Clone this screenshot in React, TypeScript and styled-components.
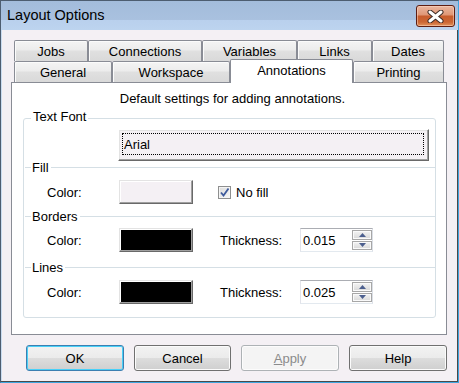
import React from "react";
import styled, { createGlobalStyle } from "styled-components";

const GlobalStyle = createGlobalStyle`
  html, body {
    margin: 0;
    padding: 0;
  }
  body {
    font-family: "Liberation Sans", Arial, sans-serif;
    font-size: 13px;
    color: #000;
  }
`;

// tab rows: the selected row sits in front, next to the panel
const backRow: [string, number][] = [
  ["Jobs", 74],
  ["Connections", 114],
  ["Variables", 95],
  ["Links", 75],
  ["Dates", 72],
];

const frontRow: [string, number][] = [
  ["General", 98],
  ["Workspace", 118],
  ["Annotations", 123],
  ["Printing", 91],
];

const ACTIVE_TAB = "Annotations";

const CloseIcon = () => (
  <svg width="17" height="13" viewBox="0 0 17 13">
    <path d="M3 2 L14 11 M14 2 L3 11" stroke="#3b2a25" strokeWidth="5" strokeLinecap="round" />
    <path d="M3 2 L14 11 M14 2 L3 11" stroke="#ffffff" strokeWidth="3" strokeLinecap="round" />
  </svg>
);

const CheckIcon = () => (
  <svg width="11" height="11" viewBox="0 0 11 11">
    <path d="M2 5.5 L4.5 8.5 L9.5 1.5" stroke="#3d5a9c" strokeWidth="1.8" fill="none" />
  </svg>
);

const Arrow = ({ up }: { up?: boolean }) => (
  <svg width="7" height="4" viewBox="0 0 7 4">
    <path d={up ? "M0 4 L3.5 0 L7 4 Z" : "M0 0 L3.5 4 L7 0 Z"} fill="#4c5f8e" />
  </svg>
);

const Spinner = ({ value }: { value: string }) => (
  <Spin>
    <SpinValue>{value}</SpinValue>
    <SpinButtons>
      <SpinButton>
        <Arrow up />
      </SpinButton>
      <SpinButton>
        <Arrow />
      </SpinButton>
    </SpinButtons>
  </Spin>
);

const App: React.FC = () => {
  return (
    <>
      <GlobalStyle />
      <Window>
        <TitleBar>
          <Title>Layout Options</Title>
          <CloseButton>
            <CloseIcon />
          </CloseButton>
        </TitleBar>

        <Body>
          <TabRow>
            {backRow.map(([label, w]) => (
              <Tab key={label} $w={w}>
                {label}
              </Tab>
            ))}
          </TabRow>
          <TabRow>
            {frontRow.map(([label, w]) => (
              <Tab key={label} $w={w} $active={label === ACTIVE_TAB}>
                {label}
              </Tab>
            ))}
          </TabRow>

          <Panel>
            <Description>Default settings for adding annotations.</Description>

            <GroupBox>
              <Legend>Text Font</Legend>
              <FontRow>
                <FontButton>
                  <FocusRect>Arial</FocusRect>
                </FontButton>
              </FontRow>

              <Separator $top={-1}>
                <Dash />
                <SepLabel>Fill</SepLabel>
                <SepLine />
              </Separator>
              <Row $top={5}>
                <Label>Color:</Label>
                <Swatch $color="#f4f0f4" />
                <CheckWrap>
                  <CheckBox>
                    <CheckIcon />
                  </CheckBox>
                  No fill
                </CheckWrap>
              </Row>

              <Separator $top={5}>
                <Dash />
                <SepLabel>Borders</SepLabel>
                <SepLine />
              </Separator>
              <Row $top={4}>
                <Label>Color:</Label>
                <Swatch $color="#000" />
                <ThickLabel>Thickness:</ThickLabel>
                <Spinner value="0.015" />
              </Row>

              <Separator $top={8}>
                <Dash />
                <SepLabel>Lines</SepLabel>
                <SepLine />
              </Separator>
              <Row $top={5} $bottom={13}>
                <Label>Color:</Label>
                <Swatch $color="#000" />
                <ThickLabel>Thickness:</ThickLabel>
                <Spinner value="0.025" />
              </Row>
            </GroupBox>
          </Panel>

          <ButtonRow>
            <DialogButton $w={98} $default>
              OK
            </DialogButton>
            <DialogButton $w={97}>Cancel</DialogButton>
            <DialogButton $w={98} disabled>
              <u>A</u>pply
            </DialogButton>
            <DialogButton $w={98}>Help</DialogButton>
          </ButtonRow>
        </Body>
      </Window>
    </>
  );
};

export default App;

const Window = styled.div`
  width: 459px;
  height: 383px;
  box-sizing: border-box;
  display: flex;
  flex-direction: column;
  background: #f4f0f4;
  border: 1px solid;
  border-color: #4d5d70 #3fa6df #3fa6df #4d5d70;
  box-shadow: inset -1px -1px 0 #4a4a4a, inset 1px 0 0 #c9dcf0;
`;

const TitleBar = styled.div`
  height: 29px;
  flex-shrink: 0;
  display: flex;
  align-items: flex-start;
  justify-content: space-between;
  padding: 0 3px 0 6px;
  background: linear-gradient(
    to bottom,
    #a3bcdb 0,
    #a9c1df 19px,
    #b9d0ed 19px,
    #bdd4ef 100%
  );
`;

const Title = styled.div`
  font-size: 14.5px;
  line-height: 17px;
  margin-top: 6px;
  color: #000;
`;

const CloseButton = styled.div`
  width: 39px;
  height: 22px;
  box-sizing: border-box;
  margin-top: 4px;
  display: flex;
  align-items: center;
  justify-content: center;
  border: 1px solid #5e1e12;
  border-radius: 3px;
  background: linear-gradient(
    to bottom,
    #eab7a0 0%,
    #df9675 45%,
    #c75c2c 50%,
    #cb6634 80%,
    #e3935c 100%
  );
  box-shadow: inset 0 0 0 1px rgba(255, 220, 200, 0.5);
`;

const Body = styled.div`
  flex: 1;
  display: flex;
  flex-direction: column;
  padding: 10px 11px 0 10px;
`;

const TabRow = styled.div`
  display: flex;
  align-items: flex-start;
  height: 21px;
  padding-left: 3px;
`;

const Tab = styled.div<{ $w: number; $active?: boolean }>`
  box-sizing: border-box;
  width: ${({ $w }) => $w}px;
  height: ${({ $active }) => ($active ? 24 : 21)}px;
  margin-top: ${({ $active }) => ($active ? -2 : 0)}px;
  padding-bottom: ${({ $active }) => ($active ? 2 : 0)}px;
  display: flex;
  align-items: center;
  justify-content: center;
  line-height: 15px;
  border: 1px solid #898c95;
  border-bottom: none;
  border-radius: 2px 2px 0 0;
  position: relative;
  z-index: ${({ $active }) => ($active ? 2 : 1)};
  background: ${({ $active }) =>
    $active
      ? "#ffffff"
      : "linear-gradient(to bottom, #f4f4f4 0%, #ececec 45%, #e0e0e0 50%, #d9d9d9 100%)"};
  box-shadow: ${({ $active }) =>
    $active ? "none" : "inset 1px 1px 0 #fbfbfb"};
`;

const Panel = styled.div`
  height: 253px;
  box-sizing: border-box;
  display: flex;
  flex-direction: column;
  padding-top: 8px;
  background: #ffffff;
  border: 1px solid #898c95;
`;

const Description = styled.div`
  line-height: 15px;
  text-align: center;
  padding-left: 7px;
`;

const GroupBox = styled.fieldset`
  margin: 3px 10px 0 11px;
  padding: 0;
  border: 1px solid #d5dfe5;
  border-radius: 3px;
  min-width: 0;
`;

const Legend = styled.legend`
  margin-left: 7px;
  padding: 0 2px 4px 2px;
  line-height: 15px;
`;

const FontRow = styled.div`
  margin-top: 1px;
  padding-left: 94px;
`;

const FontButton = styled.div`
  width: 311px;
  height: 32px;
  box-sizing: border-box;
  display: flex;
  padding: 2px 4px 5px 3px;
  background: #f4f0f4;
  border: 1px solid;
  border-color: #ffffff #696969 #696969 #ffffff;
  box-shadow: inset -1px -1px 0 #a0a0a0, inset 1px 1px 0 #e3e3e3;
`;

const FocusRect = styled.div`
  flex: 1;
  display: flex;
  align-items: center;
  padding-left: 1px;
  margin-top: 1px;
  border: 1px dotted #000;
`;

const Separator = styled.div<{ $top: number }>`
  display: flex;
  align-items: center;
  height: 15px;
  margin-top: ${({ $top }) => $top}px;
  padding-left: 1px;
`;

const Dash = styled.div`
  width: 6px;
  height: 1px;
  background: #d5dfe5;
`;

const SepLabel = styled.span`
  margin: 0 2px 0 1px;
  line-height: 15px;
`;

const SepLine = styled.div`
  flex: 1;
  height: 1px;
  background: #d5dfe5;
`;

const Row = styled.div<{ $top: number; $bottom?: number }>`
  display: flex;
  align-items: center;
  height: 24px;
  margin-top: ${({ $top }) => $top}px;
  margin-bottom: ${({ $bottom }) => $bottom ?? 0}px;
  padding-left: 23px;
`;

const Label = styled.span`
  width: 72px;
  line-height: 15px;
`;

const Swatch = styled.div<{ $color: string }>`
  width: 74px;
  height: 24px;
  box-sizing: border-box;
  background: ${({ $color }) => $color};
  border: 1px solid;
  border-color: #e3e3e3 #696969 #696969 #e3e3e3;
  box-shadow: inset -1px -1px 0 #a0a0a0, inset 1px 1px 0 #ffffff;
`;

const CheckWrap = styled.label`
  display: flex;
  align-items: center;
  gap: 5px;
  margin-left: 25px;
  line-height: 15px;
`;

const CheckBox = styled.span`
  width: 13px;
  height: 13px;
  box-sizing: border-box;
  display: flex;
  align-items: center;
  justify-content: center;
  border: 1px solid #8e8f8f;
  background: linear-gradient(135deg, #dcdcdc 0%, #f6f6f6 100%);
  box-shadow: inset 0 0 0 1px #f4f4f4;
`;

const ThickLabel = styled.span`
  width: 80px;
  margin-left: 27px;
  line-height: 15px;
`;

const Spin = styled.div`
  width: 73px;
  height: 24px;
  box-sizing: border-box;
  display: flex;
  align-items: stretch;
  border: 1px solid;
  border-color: #abadb3 #dbdfe6 #e3e9ef #e2e3ea;
  background: #ffffff;
`;

const SpinValue = styled.div`
  flex: 1;
  display: flex;
  align-items: center;
  padding-left: 2px;
`;

const SpinButtons = styled.div`
  width: 20px;
  display: flex;
  flex-direction: column;
  gap: 1px;
  padding: 1px 0 1px 0;
  margin-right: 0;
`;

const SpinButton = styled.div`
  flex: 1;
  box-sizing: border-box;
  display: flex;
  align-items: center;
  justify-content: center;
  border: 1px solid #a7a7a7;
  background: linear-gradient(to bottom, #f3f3f3 0%, #e6e6e6 50%, #d8d8d8 100%);
  box-shadow: inset 0 0 0 1px #fafafa;
`;

const ButtonRow = styled.div`
  display: flex;
  justify-content: flex-end;
  gap: 10px;
  margin-top: 10px;
`;

const DialogButton = styled.button<{ $w: number; $default?: boolean }>`
  width: ${({ $w }) => $w}px;
  height: 26px;
  box-sizing: border-box;
  padding: 0;
  font-family: "Liberation Sans", Arial, sans-serif;
  font-size: 13px;
  color: #000;
  border: 1px solid ${({ $default }) => ($default ? "#3c7fb1" : "#707070")};
  border-radius: 3px;
  background: linear-gradient(
    to bottom,
    #f2f2f2 0%,
    #ebebeb 50%,
    #dddddd 50%,
    #cfcfcf 100%
  );
  box-shadow: ${({ $default }) =>
    $default ? "inset 0 0 0 1px #48d0f8" : "inset 0 0 0 1px #fbfbfb"};

  &:disabled {
    color: #8b8b8b;
    border-color: #adb2b5;
    background: #f4f4f4;
    box-shadow: inset 0 0 0 1px #fcfcfc;
  }
`;
